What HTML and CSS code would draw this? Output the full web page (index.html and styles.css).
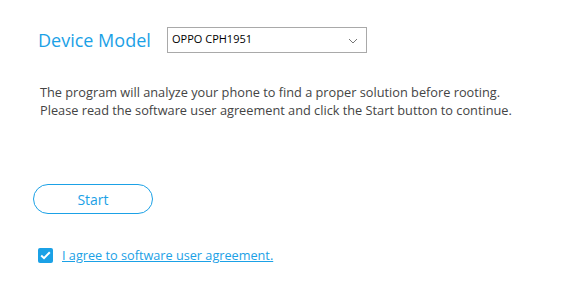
FILE: index.html
```html
<!doctype html>
<html lang="en">
<head>
    <meta charset="UTF-8">
    <title>Root</title>
    <link rel="stylesheet" href="styles.css">
</head>
<body>
<div class="page">
    <div class="model-row">
        <label class="model-label" for="model">Device Model</label>
        <div class="select-box">
            <span class="select-value">OPPO CPH1951</span>
            <svg class="chevron" width="10" height="6" viewBox="0 0 10 6"><path d="M1 1 L5 5 L9 1" fill="none" stroke="#777" stroke-width="1"/></svg>
        </div>
    </div>

    <p class="intro">
        The program will analyze your phone to find a proper solution before rooting.<br>
        Please read the software user agreement and click the Start button to continue.
    </p>

    <button class="start-btn" type="button">Start</button>

    <div class="agree-row">
        <span class="checkbox">
            <svg width="11" height="9" viewBox="0 0 11 9"><path d="M1.2 4.6 L4 7.2 L9.8 1.2" fill="none" stroke="#fff" stroke-width="2"/></svg>
        </span>
        <a class="agree-link" href="#">I agree to software user agreement.</a>
    </div>
</div>
</body>
</html>
```

FILE: styles.css
```css
body {
    margin: 0;
    background: #fff;
    font-family: "Open Sans", "DejaVu Sans", sans-serif;
}

.page {
    padding: 27px 0 0 38px;
}

.model-row {
    display: flex;
    align-items: center;
    height: 26px;
}

.model-label {
    font-size: 18px;
    color: #1ba1e6;
    width: 129px;
    line-height: 26px;
}

.select-box {
    width: 186px;
    height: 24px;
    border: 1px solid #a9a9a9;
    display: flex;
    align-items: center;
    justify-content: space-between;
    padding: 0 8px 0 4px;
}

.select-value {
    font-size: 11px;
    color: #000;
    margin-top: -4px;
}

.chevron {
    margin-top: 1px;
}

.intro {
    margin: 30px 0 0 2px;
    font-size: 12.75px;
    line-height: 18px;
    color: #444;
}

.start-btn {
    display: block;
    margin: 65px 0 0 -5px;
    width: 120px;
    height: 30px;
    border: 1px solid #1ba1e6;
    border-radius: 15px;
    background: #fff;
    color: #1ba1e6;
    font-family: inherit;
    font-size: 14px;
    padding: 0;
}

.agree-row {
    display: flex;
    align-items: center;
    margin-top: 32px;
}

.checkbox {
    width: 15px;
    height: 15px;
    background: #1ba1e6;
    border-radius: 2px;
    display: flex;
    align-items: center;
    justify-content: center;
}

.agree-link {
    margin-left: 9px;
    font-size: 12.7px;
    color: #1ba1e6;
    text-decoration: underline;
}
```
